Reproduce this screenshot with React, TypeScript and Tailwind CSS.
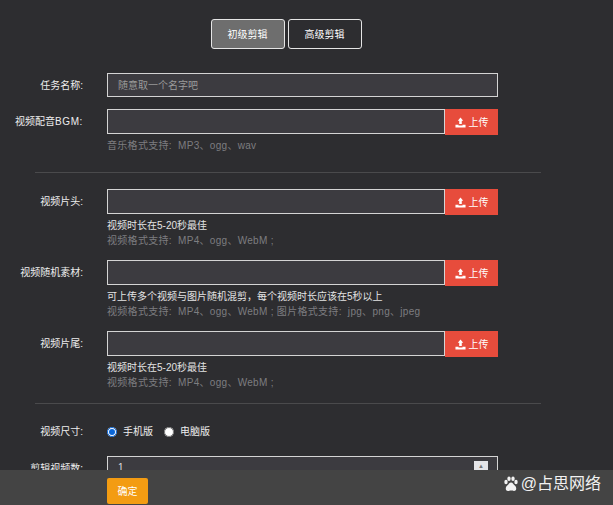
import React from 'react';

const FONT = '[font-family:"Liberation_Sans","Noto_Sans_CJK_SC",sans-serif]';

const UploadIcon = () => (
  <svg width="11" height="11" viewBox="0 0 12 12" fill="white">
    <path d="M6 0.5 9 4 7.4 4 7.4 7.5 4.6 7.5 4.6 4 3 4Z" />
    <path d="M0.5 8.5H3.8V9.2H8.2V8.5H11.5V11.5H0.5Z" />
  </svg>
);

const Label = ({ children }: { children: React.ReactNode }) => (
  <label className="w-[83px] shrink-0 pt-px text-right text-[10px] leading-[24px] text-[#eeeeee] whitespace-nowrap">
    {children}
  </label>
);

const Hint = ({ children }: { children: React.ReactNode }) => (
  <p className="text-[10px] leading-[15px] tracking-[0.3px] text-[#7d7d80] whitespace-nowrap">{children}</p>
);

const Note = ({ children }: { children: React.ReactNode }) => (
  <p className="text-[10px] leading-[15px] text-[#e4e4e4] whitespace-nowrap">{children}</p>
);

const UploadRow = ({ label, children }: { label: React.ReactNode; children?: React.ReactNode }) => (
  <div className="flex gap-[24px]">
    <Label>{label}</Label>
    <div className="w-[391px]">
      <div className="flex items-start">
        <input className="h-[25px] w-[338px] border border-[#d4d4d4] bg-[#3c3b40] outline-none" />
        <button className="flex h-[26px] w-[53px] items-center justify-center gap-[3px] bg-[#e74c3c] text-[10px] text-white">
          <UploadIcon />
          上传
        </button>
      </div>
      <div className="mt-[3px]">{children}</div>
    </div>
  </div>
);

export default function App() {
  return (
    <div className={`relative h-[505px] w-[613px] overflow-hidden bg-[#2d2d30] ${FONT}`}>
      <div className="flex justify-center gap-[3px] pt-[19px] pr-[41px]">
        <button className="h-[30px] w-[74px] rounded-[3px] border border-[#e5e5e5] bg-[#6e6e6e] text-[10px] text-white">
          初级剪辑
        </button>
        <button className="h-[30px] w-[74px] rounded-[3px] border border-[#e5e5e5] bg-[#2d2d30] text-[10px] text-white">
          高级剪辑
        </button>
      </div>

      <div className="mt-[24px] flex gap-[24px]">
        <Label>任务名称:</Label>
        <input
          placeholder="随意取一个名字吧"
          className="h-[24px] w-[391px] border border-[#d4d4d4] bg-[#3c3b40] px-[10px] text-[10px] outline-none placeholder:text-[#9a9a9a]"
        />
      </div>

      <div className="mt-[11px]">
        <UploadRow
          label={
            <>
              视频配音<span className="tracking-[0.6px]">BGM:</span>
            </>
          }
        >
          <Hint>音乐格式支持:&nbsp;&nbsp;MP3、ogg、wav</Hint>
        </UploadRow>
      </div>

      <div className="mx-[35px] mt-[19px] h-px w-[506px] bg-[#4a4a4c]" />

      <div className="mt-[16px] flex flex-col gap-[12px]">
        <UploadRow label="视频片头:">
          <Note>视频时长在5-20秒最佳</Note>
          <Hint>视频格式支持:&nbsp;&nbsp;MP4、ogg、WebM ;</Hint>
        </UploadRow>
        <UploadRow label="视频随机素材:">
          <Note>可上传多个视频与图片随机混剪，每个视频时长应该在5秒以上</Note>
          <Hint>视频格式支持:&nbsp;&nbsp;MP4、ogg、WebM ; 图片格式支持:&nbsp;&nbsp;jpg、png、jpeg</Hint>
        </UploadRow>
        <UploadRow label="视频片尾:">
          <Note>视频时长在5-20秒最佳</Note>
          <Hint>视频格式支持:&nbsp;&nbsp;MP4、ogg、WebM ;</Hint>
        </UploadRow>
      </div>

      <div className="mx-[35px] mt-[13px] h-px w-[506px] bg-[#4a4a4c]" />

      <div className="mt-[15px] flex items-center gap-[24px]">
        <Label>视频尺寸:</Label>
        <div className="flex items-center text-[10px] text-[#eeeeee]">
          <input type="radio" name="size" defaultChecked className="m-0 h-[10px] w-[10px] accent-[#0a66d8]" />
          <span className="ml-[6px]">手机版</span>
          <input type="radio" name="size" className="m-0 ml-[11px] h-[10px] w-[10px]" />
          <span className="ml-[6px]">电脑版</span>
        </div>
      </div>

      <div className="mt-[12px] flex gap-[24px]">
        <Label>剪辑视频数:</Label>
        <div className="relative h-[24px] w-[391px] border border-[#d4d4d4] bg-[#3c3b40] px-[10px] text-[10px] leading-[22px] text-[#dddddd]">
          1
          <span className="absolute right-[9px] top-[4px] flex h-[9px] w-[14px] items-center justify-center bg-[#e4e4e8] text-[6px] leading-none text-[#777777]">
            ▲
          </span>
        </div>
      </div>

      {/* footer bar sits over the form */}
      <div className="absolute inset-x-0 bottom-0 h-[35px] bg-[#444444]">
        <button className="absolute left-[107px] top-[8px] h-[26px] w-[41px] rounded-[2px] bg-[#f39c12] text-[10px] text-white">
          确定
        </button>
        <div className="absolute right-[12px] top-[2px] flex items-center gap-[2px] text-[16px] text-[#f2f2f2]">
          <svg width="16" height="16" viewBox="0 0 16 16" fill="#f2f2f2">
            <ellipse cx="3" cy="6" rx="1.7" ry="2.2" />
            <ellipse cx="6" cy="2.8" rx="1.7" ry="2.2" />
            <ellipse cx="10" cy="2.8" rx="1.7" ry="2.2" />
            <ellipse cx="13" cy="6" rx="1.7" ry="2.2" />
            <path d="M8 6.5C6 6.5 5.6 8.6 4 9.8 2.4 11 2 14.8 5 15 6.3 15 7 14.6 8 14.6S9.7 15 11 15C14 14.8 13.6 11 12 9.8 10.4 8.6 10 6.5 8 6.5Z" />
          </svg>
          <span>@占思网络</span>
        </div>
      </div>
    </div>
  );
}
